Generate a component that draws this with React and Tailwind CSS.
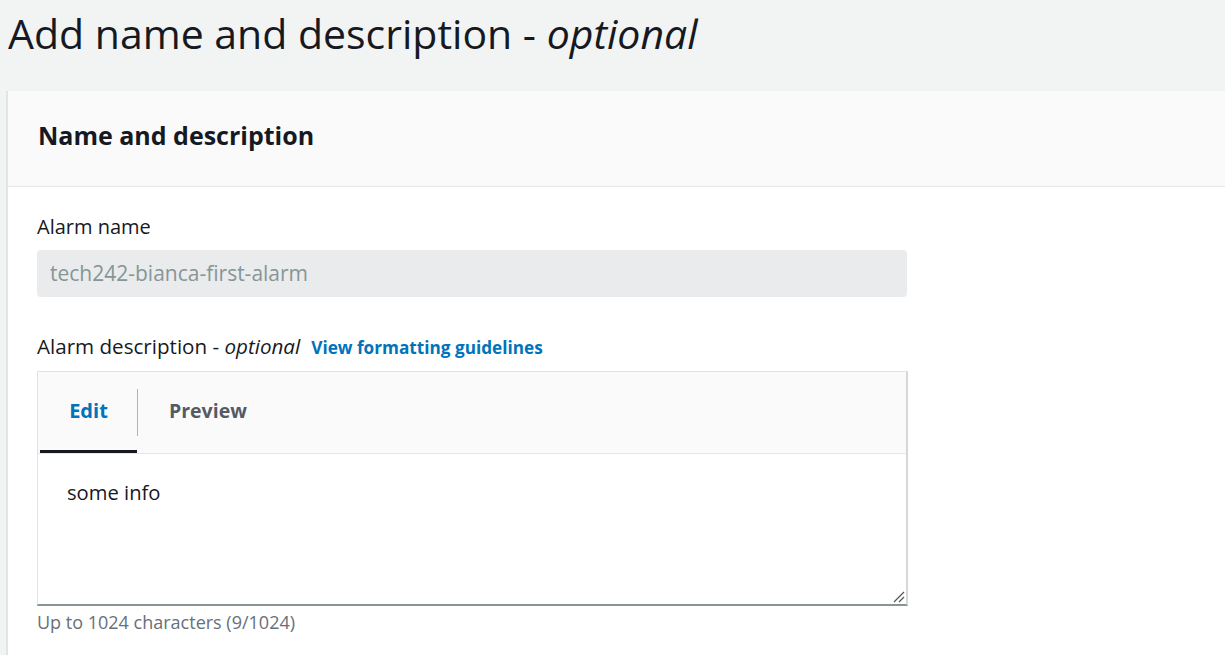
export default function App() {
  return (
    <div className="w-[1225px] h-[655px] overflow-hidden bg-[#f2f3f3]" style={{ fontFamily: '"Open Sans", "Noto Sans", sans-serif' }}>
      <h1 className="pl-[8px] pt-[8px] h-[91px] text-[41px] leading-[50px] text-[#16191f] font-normal">
        Add name and description - <span className="italic">optional</span>
      </h1>
      <div className="ml-[6px] border-l-2 border-[#e1e4e4] bg-white h-[600px]">
        <div className="h-[96px] bg-[#fafafa] border-b border-[#e6e6e6] flex items-center pl-[30px] pb-[5px]">
          <h2 className="text-[25px] font-bold text-[#16191f]">Name and description</h2>
        </div>
        <div className="pl-[29px] pt-[26px]">
          <div className="text-[20px] leading-[28px] text-[#16191f]">Alarm name</div>
          <div className="mt-[9px] w-[870px] h-[47px] rounded-[4px] bg-[#e9ebed] flex items-center pl-[13px] text-[21px] text-[#879596]">
            tech242-bianca-first-alarm
          </div>
          <div className="mt-[35px] flex items-baseline text-[20.6px] leading-[28px] text-[#16191f]">
            <span>Alarm description - <span className="italic">optional</span></span>
            <span className="ml-[11px] text-[17.2px] font-bold text-[#0073bb]">View formatting guidelines</span>
          </div>
          <div className="mt-[9px] w-[871px] border border-[#e2e3e4] border-b-2 border-b-[#879596] border-r-2 border-r-[#d5d7d8]">
            <div className="h-[82px] bg-[#fafafa] border-b border-[#e6e6e6] flex items-stretch">
              <div className="ml-[2px] w-[97px] flex items-center justify-center border-b-[3px] border-[#16191f] relative">
                <span className="text-[20px] font-bold text-[#0073bb]">Edit</span>
              </div>
              <div className="w-px bg-[#aab7b8] my-[17px]" />
              <div className="flex items-center pl-[31px] pb-[3px]">
                <span className="text-[19.5px] font-bold text-[#545b64]">Preview</span>
              </div>
            </div>
            <div className="h-[150px] relative pl-[29px] pt-[25px]">
              <div className="text-[20.2px] leading-[26px] text-[#16191f]">some info</div>
              <svg className="absolute right-[1px] bottom-[1px]" width="12" height="12" viewBox="0 0 12 12">
                <line x1="1" y1="11" x2="11" y2="1" stroke="#555" strokeWidth="1.3" />
                <line x1="6" y1="11" x2="11" y2="6" stroke="#555" strokeWidth="1.3" />
              </svg>
            </div>
          </div>
          <div className="mt-[4px] text-[18px] leading-[24px] text-[#687078]">Up to 1024 characters (9/1024)</div>
        </div>
      </div>
    </div>
  );
}
